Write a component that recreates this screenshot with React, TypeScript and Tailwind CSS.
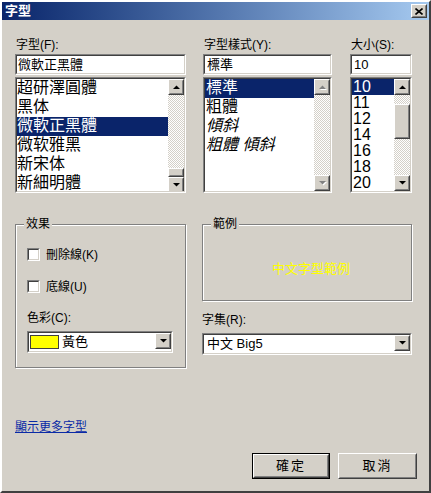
import type { ReactNode } from 'react';

const fontNames = ['超研澤圓體', '黑体', '微軟正黑體', '微软雅黑', '新宋体', '新細明體'];
const styleNames = [
    { label: '標準', italic: false },
    { label: '粗體', italic: false },
    { label: '傾斜', italic: true },
    { label: '粗體 傾斜', italic: true },
];
const sizes = ['10', '11', '12', '14', '16', '18', '20'];

// classic 3D edges
function Raised({ className = '', children }: { className?: string; children?: ReactNode }) {
    return (
        <div className={`border border-t-white border-l-white border-r-[#404040] border-b-[#404040] bg-[#d4d0c8] ${className}`}>
            <div className="w-full h-full border border-t-[#d4d0c8] border-l-[#d4d0c8] border-r-[#808080] border-b-[#808080] flex items-center justify-center">
                {children}
            </div>
        </div>
    );
}

function Sunken({ className = '', children }: { className?: string; children?: ReactNode }) {
    return (
        <div className={`border border-t-[#808080] border-l-[#808080] border-r-white border-b-white ${className}`}>
            <div className="w-full h-full border border-t-[#404040] border-l-[#404040] border-r-[#d4d0c8] border-b-[#d4d0c8] bg-white overflow-hidden flex">
                {children}
            </div>
        </div>
    );
}

function Arrow({ dir, disabled = false }: { dir: 'up' | 'down'; disabled?: boolean }) {
    const pts = dir === 'up' ? '0,4 7,4 3.5,0.5' : '0,0 7,0 3.5,3.5';
    return (
        <Raised className="w-[16px] h-[16px] shrink-0">
            <svg width="7" height="4" viewBox="0 0 7 4" className={disabled ? 'drop-shadow-[1px_1px_0_#fff]' : ''}>
                <polygon points={pts} fill={disabled ? '#808080' : '#000'} />
            </svg>
        </Raised>
    );
}

const track = 'bg-[image:repeating-conic-gradient(#d4d0c8_0%_25%,#ffffff_0%_50%)] bg-[length:2px_2px]';

function Scrollbar({ thumbTop, thumbH, disabled = false }: { thumbTop?: number; thumbH?: number; disabled?: boolean }) {
    return (
        <div className={`w-[16px] h-full flex flex-col shrink-0 ${track}`}>
            <Arrow dir="up" disabled={disabled} />
            <div className="flex-1 flex flex-col">
                {thumbTop !== undefined && (
                    <>
                        <div style={{ height: thumbTop }} />
                        <Raised className="w-[16px] shrink-0" >
                            <div style={{ height: (thumbH ?? 10) - 4 }} />
                        </Raised>
                    </>
                )}
            </div>
            <Arrow dir="down" disabled={disabled} />
        </div>
    );
}

function Combo({ className = '', children }: { className?: string; children: ReactNode }) {
    return (
        <Sunken className={className}>
            <div className="flex-1 flex items-center">{children}</div>
            <Arrow dir="down" />
        </Sunken>
    );
}

function Group({ label, className = '', children }: { label: string; className?: string; children?: ReactNode }) {
    return (
        <div className={`relative border border-[#808080] shadow-[1px_1px_0_#fff,inset_1px_1px_0_#fff] ${className}`}>
            <span className="absolute -top-[8px] left-[8px] bg-[#d4d0c8] px-[2px] text-[12px] leading-[14px]">
                {label}
            </span>
            {children}
        </div>
    );
}

function CheckRow({ label }: { label: string }) {
    return (
        <div className="flex items-center h-[13px]">
            <Sunken className="w-[13px] h-[13px]" />
            <span className="ml-[6px] text-[12px] leading-[14px]">{label}</span>
        </div>
    );
}

export default function App() {
    return (
        <div className="w-[431px] h-[493px] bg-[#d4d0c8] font-['Liberation_Sans','Noto_Sans_CJK_TC',sans-serif] text-black border-2 border-t-white border-l-white border-r-[#404040] border-b-[#404040] flex flex-col">
            {/* Title bar */}
            <div className="h-[18px] bg-linear-to-r from-[#0a246a] to-[#a6caf0] flex items-center justify-between pl-[3px] pr-[2px]">
                <span className="text-white font-bold text-[13px] leading-[16px]">字型</span>
                <Raised className="w-[16px] h-[14px]">
                    <svg width="8" height="7" viewBox="0 0 8 7">
                        <path d="M0.5 0.5 L7.5 6.5 M7.5 0.5 L0.5 6.5" stroke="#000" strokeWidth="1.6" />
                    </svg>
                </Raised>
            </div>

            <div className="flex-1 flex flex-col pl-[13px] pt-[18px]">
                {/* Font / Style / Size */}
                <div className="flex">
                    <div className="w-[171px] flex flex-col">
                        <div className="h-[14px] text-[12px] leading-[14px] pl-[1px]">字型(F):</div>
                        <Sunken className="mt-[2px] h-[21px]">
                            <span className="pl-[1px] text-[13px] leading-[17px]">微軟正黑體</span>
                        </Sunken>
                        <Sunken className="mt-[2px] h-[116px]">
                            <div className="flex-1 flex flex-col">
                                {fontNames.map((f) => (
                                    <div
                                        key={f}
                                        className={`h-[19px] shrink-0 text-[16px] leading-[18px] ${f === '微軟正黑體' ? 'bg-[#0a246a] text-white' : ''}`}
                                    >
                                        {f}
                                    </div>
                                ))}
                            </div>
                            <Scrollbar thumbTop={73} thumbH={9} />
                        </Sunken>
                    </div>

                    <div className="w-[129px] ml-[17px] flex flex-col">
                        <div className="h-[14px] text-[12px] leading-[14px] pl-[1px]">字型樣式(Y):</div>
                        <Sunken className="mt-[2px] h-[21px]">
                            <span className="pl-[2px] text-[13px] leading-[17px]">標準</span>
                        </Sunken>
                        <Sunken className="mt-[2px] h-[116px]">
                            <div className="flex-1 flex flex-col">
                                {styleNames.map((s, i) => (
                                    <div
                                        key={s.label}
                                        className={`h-[19px] shrink-0 pl-[1px] text-[16px] leading-[18px] ${i === 0 ? 'bg-[#0a246a] text-white' : ''} ${s.italic ? 'italic' : ''}`}
                                    >
                                        {s.label}
                                    </div>
                                ))}
                            </div>
                            <Scrollbar disabled />
                        </Sunken>
                    </div>

                    <div className="w-[62px] ml-[18px] flex flex-col">
                        <div className="h-[14px] text-[12px] leading-[14px] pl-[1px]">大小(S):</div>
                        <Sunken className="mt-[2px] h-[21px]">
                            <span className="pl-[2px] text-[13px] leading-[17px]">10</span>
                        </Sunken>
                        <Sunken className="mt-[2px] h-[116px]">
                            <div className="flex-1 flex flex-col">
                                {sizes.map((s, i) => (
                                    <div
                                        key={s}
                                        className={`h-[16px] shrink-0 pl-[1px] text-[16px] leading-[16px] ${i === 0 ? 'bg-[#0a246a] text-white' : ''}`}
                                    >
                                        {s}
                                    </div>
                                ))}
                            </div>
                            <Scrollbar thumbTop={9} thumbH={35} />
                        </Sunken>
                    </div>
                </div>

                {/* Effects / Sample */}
                <div className="flex mt-[31px]">
                    <Group label="效果" className="w-[171px] h-[144px] pl-[11px] pt-[23px]">
                        <CheckRow label="刪除線(K)" />
                        <div className="mt-[19px]">
                            <CheckRow label="底線(U)" />
                        </div>
                        <div className="mt-[18px] h-[14px] text-[12px] leading-[14px]">色彩(C):</div>
                        <Combo className="mt-[6px] w-[146px] h-[22px]">
                            <div className="ml-[1px] w-[29px] h-[14px] bg-[#ffff00] border border-[#404040]" />
                            <span className="ml-[3px] text-[13px] leading-[16px]">黃色</span>
                        </Combo>
                    </Group>

                    <div className="w-[210px] ml-[16px] flex flex-col">
                        <Group label="範例" className="h-[77px] flex items-center justify-center pt-[12px]">
                            <span className="text-[13px] leading-[16px] text-[#ffff00] pl-[8px]">中文字型範例</span>
                        </Group>
                        <div className="mt-[12px] h-[14px] text-[12px] leading-[14px]">字集(R):</div>
                        <Combo className="mt-[6px] h-[22px]">
                            <span className="ml-[3px] text-[13px] leading-[16px]">中文 Big5</span>
                        </Combo>
                    </div>
                </div>

                {/* Link */}
                <div className="mt-[52px] h-[14px] text-[12px] leading-[14px]">
                    <span className="text-[#0a2aa6] underline">顯示更多字型</span>
                </div>

                {/* Buttons */}
                <div className="mt-[19px] flex justify-end pr-[12px]">
                    <div className="w-[78px] h-[26px] border border-black">
                        <Raised className="w-full h-full">
                            <span className="text-[13px] leading-[16px] tracking-[2px]">確定</span>
                        </Raised>
                    </div>
                    <Raised className="ml-[8px] w-[79px] h-[26px]">
                        <span className="text-[13px] leading-[16px] tracking-[2px]">取消</span>
                    </Raised>
                </div>
            </div>
        </div>
    );
}
